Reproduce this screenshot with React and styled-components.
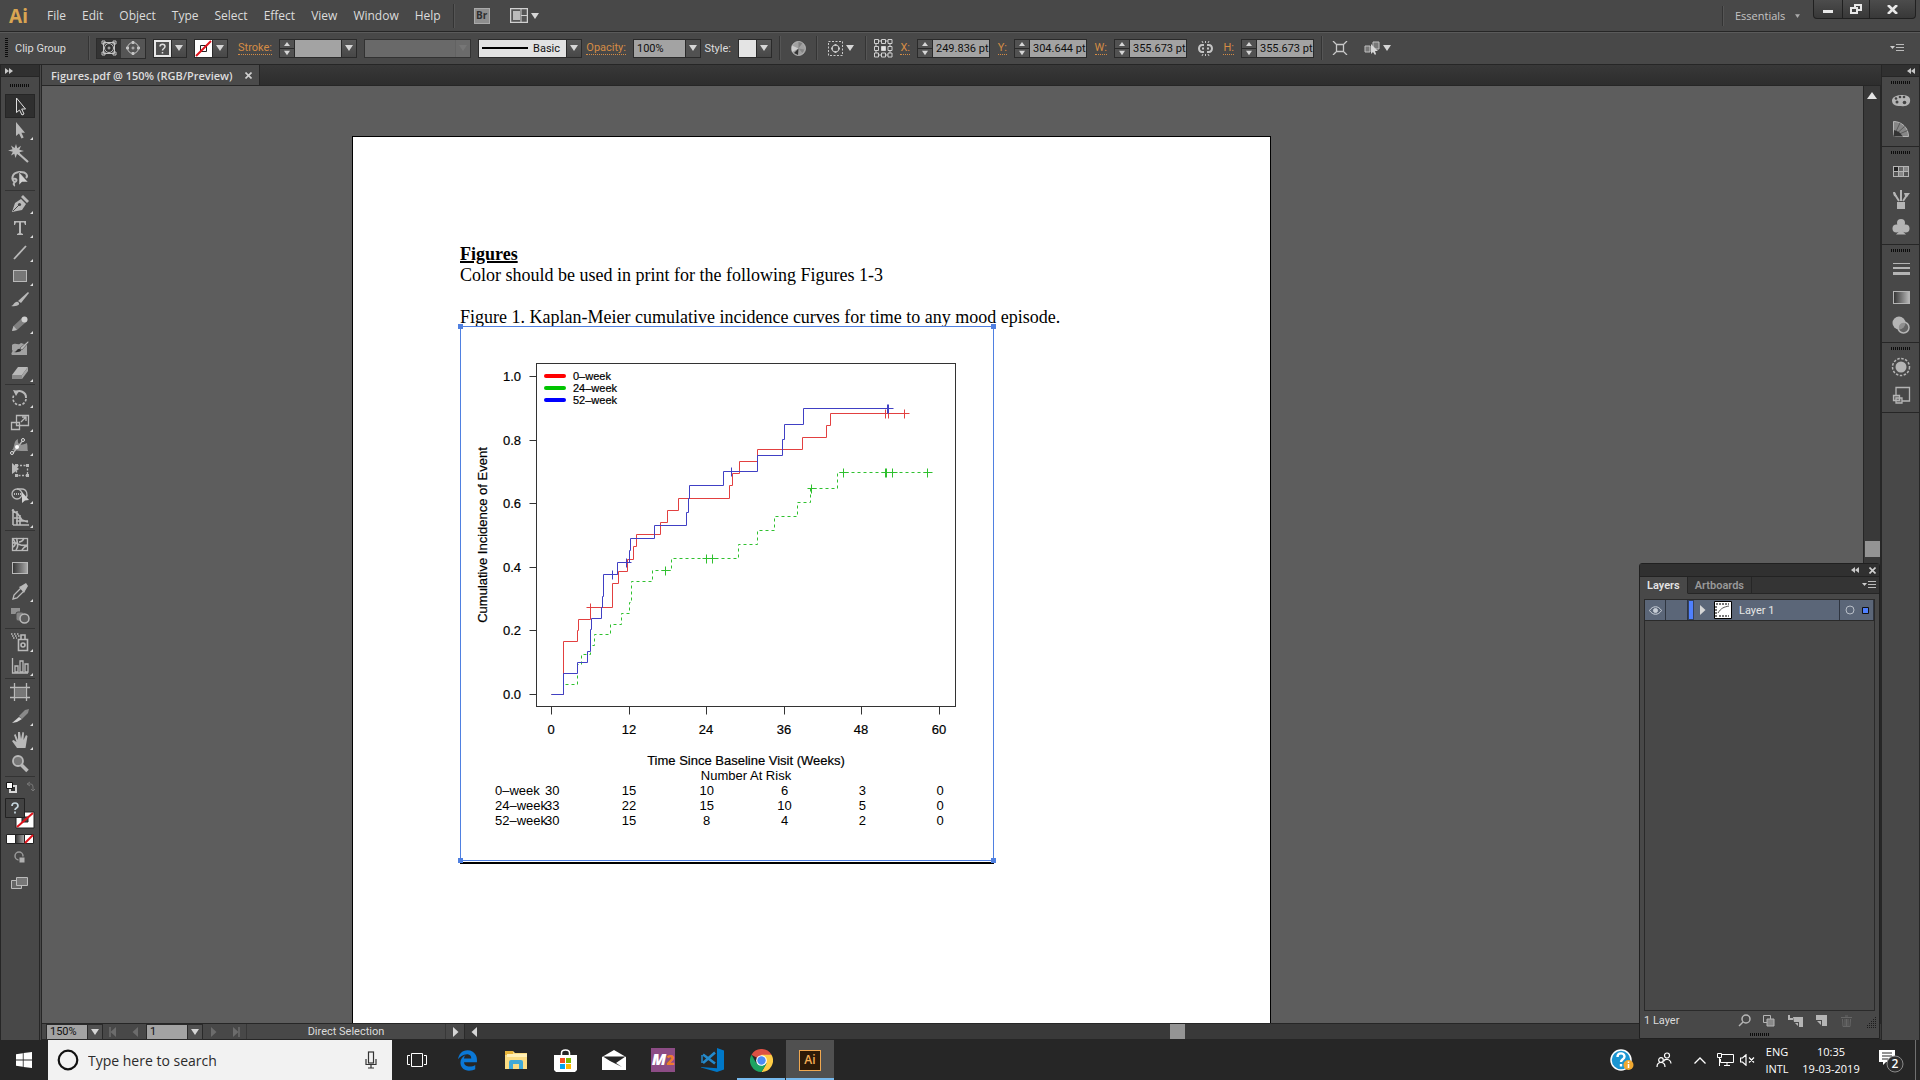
import React from 'react';
import styled, {createGlobalStyle} from 'styled-components';
import {FaEdgeLegacy} from 'react-icons/fa6';

const GlobalStyle = createGlobalStyle`
  * {
    box-sizing: border-box;
  }
  body {
    margin: 0;
    background: #262626;
    color: #dcdcdc;
    font-family: Roboto, "Noto Sans", sans-serif;
    font-size: 11px;
    overflow: hidden;
  }
  button, input, select {
    font: inherit;
    color: inherit;
    margin: 0;
    padding: 0;
    border: 0;
    border-radius: 0;
    background: none;
  }
  svg {
    display: block;
    flex: none;
  }
`;

const Window = styled.div`
  display: flex;
  flex-direction: column;
  height: 100vh;
  background: #484848;
`;

/* ---------- menu bar ---------- */

const MenuBar = styled.header`
  display: flex;
  align-items: center;
  height: 32px;
  padding-left: 9px;
  border-bottom: 1px solid #262626;
  font-family: "Open Sans", "Noto Sans", sans-serif;
`;

const Logo = styled.span`
  width: 30px;
  color: #d9a552;
  font-family: "Noto Sans", sans-serif;
  font-size: 19px;
  font-weight: 700;
  line-height: 24px;
`;

const MenuItem = styled.button`
  padding: 0 8px;
  font-size: 12px;
  line-height: 20px;
`;

const Rule = styled.span`
  flex: none;
  width: 1px;
  height: ${(props) => props.$height || 24}px;
  background: #343434;
  box-shadow: 1px 0 0 #555;
`;

const MenuIcons = styled.div`
  display: flex;
  gap: 20px;
  align-items: center;
  margin-left: 4px;
`;

const BridgeButton = styled.button`
  width: 16px;
  height: 16px;
  background: #8e8e8e;
  border: 1px solid #aaa;
  color: #303030;
  font-size: 10px;
  font-weight: 700;
  line-height: 13px;
`;

const IconButton = styled.button`
  display: flex;
  align-items: center;
  justify-content: center;
  gap: 3px;
  width: ${(props) => (props.$width ? props.$width + 'px' : 'auto')};
`;

const MenuEnd = styled.div`
  display: flex;
  align-items: center;
  gap: 12px;
  height: 31px;
  margin-left: auto;
  padding-right: 4px;
`;

const Workspace = styled.button`
  display: flex;
  align-items: center;
  gap: 10px;
  width: 66px;
  color: #c4c4c4;
`;

const WindowButtons = styled.div`
  display: flex;
  align-self: flex-start;
  height: 19px;
  border: 1px solid #202020;
  border-top: 0;
  border-radius: 0 0 4px 4px;
  background: linear-gradient(#4c4c4c, #383838);
`;

const WindowButton = styled.button`
  display: flex;
  align-items: center;
  justify-content: center;
  width: ${(props) => props.$width}px;
  & + & {
    border-left: 1px solid #202020;
  }
`;

/* ---------- control bar ---------- */

const ControlBar = styled.div`
  display: flex;
  align-items: center;
  gap: 7px;
  height: 33px;
  padding: 0 16px 1px 5px;
  border-top: 1px solid #5a5a5a;
  border-bottom: 1px solid #262626;
  white-space: nowrap;
`;

const Grip = styled.span`
  flex: none;
  width: ${(props) => (props.$across ? 20 : 3)}px;
  height: ${(props) => (props.$across ? 3 : 20)}px;
  background: repeating-linear-gradient(
    ${(props) => (props.$across ? '90deg' : '180deg')},
    #0c0c0c 0 1px,
    #484848 1px 2px
  );
`;

const ObjectKind = styled.span`
  width: 66px;
`;

const Toggles = styled.div`
  display: flex;
  width: 50px;
  height: 21px;
  border: 1px solid #2c2c2c;
`;

const Toggle = styled.button`
  display: flex;
  flex: 1;
  align-items: center;
  justify-content: center;
  background: ${(props) => (props.$on ? '#343434' : '#555')};
`;

const Boxed = styled.div`
  display: flex;
  height: 19px;
  border: 1px solid #2a2a2a;
`;

const Swatch = styled.button`
  display: flex;
  align-items: center;
  justify-content: center;
  width: 17px;
  background: ${(props) => props.$color || '#e4e4e4'};
`;

const Arrow = styled.button`
  display: flex;
  align-items: center;
  justify-content: center;
  width: 15px;
  border-left: 1px solid #2a2a2a;
  background: linear-gradient(#5a5a5a, #474747);
`;

const FieldName = styled.label`
  width: ${(props) => props.$width}px;
  display: flex;
  justify-content: flex-end;
  color: ${(props) => (props.$plain ? '#dcdcdc' : '#d58c45')};
  & > span {
    line-height: 13px;
    border-bottom: ${(props) => (props.$plain ? '0' : '1px dotted #d58c45')};
  }
`;

const Steps = styled.span`
  display: flex;
  flex-direction: column;
  width: 15px;
  border-right: 1px solid #2a2a2a;
`;

const Step = styled.button`
  display: flex;
  flex: 1;
  align-items: center;
  justify-content: center;
  background: #525252;
  & + & {
    border-top: 1px solid #2a2a2a;
  }
`;

const NumberInput = styled.input`
  width: ${(props) => props.$width || 56}px;
  padding-left: 3px;
  background: #a3a3a3;
  color: #101010;
`;

const SelectBox = styled.span`
  display: grid;
  grid-template-columns: ${(props) => props.$width}px 15px;
  height: ${(props) => props.$height || 19}px;
  border: 1px solid #2a2a2a;
  opacity: ${(props) => (props.$off ? 0.7 : 1)};
  & > select {
    grid-area: 1 / 1 / 2 / 3;
    appearance: none;
    padding-left: 3px;
    background: ${(props) => props.$color || '#a3a3a3'};
    color: #101010;
  }
  & > span {
    grid-area: 1 / 2 / 2 / 3;
    display: flex;
    align-items: center;
    justify-content: center;
    border-left: 1px solid #2a2a2a;
    background: #515151;
    pointer-events: none;
  }
`;

const BrushButton = styled.button`
  display: flex;
  align-items: center;
  justify-content: flex-end;
  gap: 5px;
  width: 87px;
  padding-right: 6px;
  background: #e2e2e2;
  color: #101010;
`;

const BarMenu = styled.button`
  margin-left: auto;
`;

/* ---------- work area ---------- */

const Body = styled.div`
  display: flex;
  flex: 1;
  min-height: 0;
`;

const ToolPanel = styled.aside`
  display: flex;
  flex-direction: column;
  align-items: center;
  flex: none;
  width: 42px;
  border-left: 1px solid #262626;
  border-right: 3px double #262626;
`;

const PanelCap = styled.div`
  display: flex;
  align-items: center;
  justify-content: ${(props) => (props.$end ? 'flex-end' : 'flex-start')};
  align-self: stretch;
  height: 12px;
  padding: 0 4px;
  background: #303030;
  border-bottom: 1px solid #262626;
`;

const GripRow = styled.div`
  display: flex;
  align-items: center;
  justify-content: center;
  height: ${(props) => props.$height}px;
`;

const ToolGroup = styled.div`
  display: flex;
  flex-direction: column;
  width: 30px;
  border-bottom: 1px solid #333;
  margin-bottom: 1px;
`;

const Tool = styled.button`
  height: 22px;
  width: 28px;
  margin: 1px;
  background: ${(props) => (props.$active ? '#2f2f2f' : 'none')};
  box-shadow: ${(props) => (props.$active ? '0 0 0 1px #262626' : 'none')};
`;

const Paints = styled.div`
  width: 30px;
`;

const Main = styled.main`
  display: flex;
  flex: 1;
  flex-direction: column;
  min-width: 0;
`;

const TabStrip = styled.div`
  display: flex;
  height: 21px;
  background: linear-gradient(#383838, #2d2d2d);
  border-bottom: 1px solid #262626;
`;

const DocumentTab = styled.div`
  display: flex;
  align-items: center;
  gap: 12px;
  padding: 0 7px 0 9px;
  background: #4a4a4a;
  border-right: 1px solid #262626;
  color: #dedede;
  font-family: "Open Sans", "Noto Sans", sans-serif;
  font-weight: 600;
`;

const CanvasRow = styled.div`
  display: flex;
  flex: 1;
  min-height: 0;
`;

const Canvas = styled.div`
  flex: 1;
  min-width: 0;
  overflow: hidden;
  background: #5d5d5d;
  padding: 50px 0 0 310px;
`;

const Artboard = styled.article`
  width: 919px;
  height: 1188px;
  padding: 107px 0 0 107px;
  border: 1px solid #000;
  background: #fff;
  color: #000;
  font-family: "Liberation Serif", serif;
  font-size: 18px;
  line-height: 21px;
  white-space: nowrap;
  h1, p {
    margin: 0;
    font-size: 18px;
  }
  h1 {
    text-decoration: underline;
    text-decoration-thickness: 2px;
  }
  p + p {
    margin-top: 21px;
  }
`;

const Figure = styled.figure`
  position: relative;
  width: 534px;
  height: 535px;
  margin: -2px 0 0;
  border: 1px solid #4f80e1;
  box-shadow: 0 1px 0 #fff, 0 3px 0 #000;
  font-family: "Liberation Sans", Arial, sans-serif;
  font-size: 13px;
  line-height: 15px;
`;

const Handle = styled.i`
  position: absolute;
  width: 5px;
  height: 5px;
  background: #4f80e1;
  ${(props) => props.$y}: -3px;
  ${(props) => props.$x}: -3px;
`;

const RiskTable = styled.table`
  width: 484px;
  margin-left: 34px;
  border-collapse: collapse;
  table-layout: fixed;
  caption {
    padding-left: 18px;
  }
  th, td {
    padding: 0;
    font-weight: 400;
    text-align: center;
  }
  th, th + td {
    text-align: left;
  }
`;

const VScroll = styled.div`
  display: flex;
  flex-direction: column;
  align-items: center;
  justify-content: space-between;
  width: 18px;
  padding: 6px 0 0;
  background: #393939;
  border-left: 1px solid #262626;
  border-right: 1px solid #262626;
`;

const VThumb = styled.div`
  width: 15px;
  height: 16px;
  margin-bottom: 466px;
  background: #949494;
`;

const StatusBar = styled.div`
  display: flex;
  align-items: center;
  height: 17px;
  border-top: 1px solid #262626;
  border-bottom: 1px solid #262626;
  padding-left: 4px;
`;

const StatusNav = styled.div`
  display: flex;
  align-items: center;
  justify-content: space-around;
  width: 43px;
`;

const StatusText = styled.div`
  width: 200px;
  border-left: 1px solid #383838;
  border-right: 1px solid #383838;
  line-height: 15px;
  text-align: center;
`;

const HScroll = styled.div`
  display: flex;
  flex: 1;
  align-items: center;
  align-self: stretch;
  padding-left: 5px;
  border-left: 1px solid #2a2a2a;
  background: #393939;
`;

const HThumb = styled.div`
  width: 15px;
  height: 15px;
  margin-left: 49%;
  background: #949494;
`;

const Dock = styled.aside`
  flex: none;
  width: 39px;
  border-left: 1px solid #262626;
  border-right: 1px solid #262626;
`;

const DockGroup = styled.div`
  display: flex;
  flex-direction: column;
  align-items: center;
  padding-bottom: 3px;
  border-bottom: 1px solid #262626;
`;

const DockButton = styled.button`
  display: flex;
  align-items: center;
  justify-content: center;
  width: 36px;
  height: 28px;
`;

/* ---------- layers panel ---------- */

const LayersPanel = styled.section`
  position: absolute;
  right: 40px;
  bottom: 41px;
  display: flex;
  flex-direction: column;
  width: 241px;
  height: 476px;
  background: #484848;
  border: 1px solid #202020;
  border-radius: 3px 3px 0 0;
`;

const PanelTitle = styled.div`
  display: flex;
  align-items: center;
  justify-content: flex-end;
  gap: 10px;
  height: 13px;
  padding-right: 3px;
  background: #303030;
  border-bottom: 1px solid #222;
`;

const PanelTabs = styled.div`
  display: flex;
  height: 17px;
  background: #343434;
`;

const PanelTab = styled.button`
  padding: 0 7px;
  border-right: 1px solid #262626;
  border-bottom: 1px solid ${(props) => (props.$active ? '#484848' : '#262626')};
  background: ${(props) => (props.$active ? '#484848' : '#353535')};
  color: ${(props) => (props.$active ? '#e4e4e4' : '#999')};
  font-weight: 600;
  line-height: 15px;
`;

const PanelMenu = styled.div`
  display: flex;
  flex: 1;
  align-items: center;
  justify-content: flex-end;
  padding-right: 3px;
  border-bottom: 1px solid #262626;
`;

const LayerList = styled.div`
  flex: 1;
  margin: 5px 4px 0;
  border: 1px solid #2a2a2a;
`;

const LayerRow = styled.div`
  display: flex;
  align-items: stretch;
  height: 21px;
  background: #5b6678;
  border-bottom: 1px solid #2a2a2a;
  color: #e6e6e6;
`;

const LayerCell = styled.div`
  display: flex;
  align-items: center;
  justify-content: ${(props) => (props.$grow ? 'flex-start' : 'center')};
  gap: ${(props) => props.$gap || 0}px;
  flex: ${(props) => (props.$grow ? '1' : 'none')};
  width: ${(props) => props.$width}px;
  padding-left: ${(props) => (props.$grow ? 4 : 0)}px;
  border-right: 1px solid #2f3540;
`;

const LayerColor = styled.span`
  width: 6px;
  border: 1px solid #33415e;
  background: #4f80ff;
`;

const PanelFoot = styled.div`
  display: flex;
  align-items: center;
  height: 19px;
  padding-left: 4px;
`;

const FootButtons = styled.div`
  display: flex;
  align-items: center;
  gap: 9px;
  margin-left: auto;
  padding-right: 2px;
`;

/* ---------- taskbar ---------- */

const Taskbar = styled.footer`
  display: flex;
  flex: none;
  height: 40px;
  background: #262626;
  color: #fff;
  font-family: "Open Sans", "Noto Sans", sans-serif;
`;

const Start = styled.button`
  display: flex;
  align-items: center;
  width: 48px;
  padding-left: 16px;
`;

const Search = styled.label`
  display: flex;
  align-items: center;
  gap: 9px;
  width: 344px;
  padding: 0 15px 0 9px;
  background: #f2f2f2;
  color: #2b2b2b;
  input {
    flex: 1;
    min-width: 0;
    font-size: 14px;
    outline: 0;
  }
  input::placeholder {
    color: #2b2b2b;
    opacity: 1;
  }
`;

const TaskButton = styled.button`
  display: flex;
  align-items: center;
  justify-content: center;
  width: ${(props) => props.$width || 48}px;
  margin-right: 1px;
  background: ${(props) => (props.$active ? '#505050' : 'none')};
  box-shadow: ${(props) => (props.$open ? 'inset 0 -2px 0 #76b9ed' : 'none')};
`;

const AiTile = styled.span`
  width: 22px;
  height: 21px;
  border: 1px solid #f0a850;
  background: #2c1a08;
  color: #f5ae55;
  font-size: 12px;
  font-weight: 600;
  line-height: 18px;
`;

const MTile = styled.span`
  display: flex;
  justify-content: center;
  width: 24px;
  height: 24px;
  background: #8c4c85;
  font-size: 16px;
  font-style: italic;
  font-weight: 800;
  line-height: 23px;
  b {
    color: #ee7d2b;
    font-size: 14px;
    font-style: normal;
  }
`;

const Tray = styled.div`
  display: flex;
  margin-left: auto;
`;

const TrayItem = styled.button`
  display: flex;
  align-items: center;
  justify-content: center;
  width: ${(props) => props.$width}px;
`;

const TrayText = styled.button`
  width: ${(props) => props.$width}px;
  text-align: center;
  line-height: 17px;
`;

const ShowDesktop = styled.button`
  width: 5px;
  border-left: 1px solid #707070;
`;

/* ---------- drawings ---------- */

const Down = ({w = 8, c = '#d6d6d6'}) => (
  <svg width={w} height={6} viewBox="0 0 8 6"><path d="M0 0h8L4 6z" fill={c} /></svg>
);

const Up = () => (
  <svg width={6} height={4} viewBox="0 0 6 4"><path d="M3 0l3 4H0z" fill="#d6d6d6" /></svg>
);

const Side = ({left, bar, c = '#d6d6d6'}) => (
  <svg width={9} height={10} viewBox="0 0 9 10">
    <path d={left ? 'M7 0v10L1.5 5z' : 'M2 0v10l5.5-5z'} fill={c} />
    {bar && <path d={left ? 'M1 0v10' : 'M8 0v10'} stroke={c} strokeWidth="1.5" />}
  </svg>
);

const Chevrons = ({left}) => (
  <svg width={8} height={6} viewBox="0 0 8 6">
    <path d={left ? 'M4 0v6L0 3zM8 0v6L4 3z' : 'M0 0v6l4-3zM4 0v6l4-3z'} fill="#c8c8c8" />
  </svg>
);

const Cross = () => (
  <svg width={7} height={7} viewBox="0 0 7 7">
    <path d="M.5.5l6 6M6.5.5l-6 6" stroke="#d0d0d0" strokeWidth="1.6" />
  </svg>
);

const ListIcon = () => (
  <svg width={14} height={10} viewBox="0 0 14 10">
    <path d="M0 3h5L2.500 6z" fill="#ccc" />
    <path d="M6 1.500h8M6 4.500h8M6 7.500h8" stroke="#bbb" />
  </svg>
);

const G = '#b9b9b9';
const line = {fill: 'none', stroke: G, strokeWidth: 1.3};

const toolGroups = [
  [
    {name: 'Selection', art: <path d="M10.500 3v14.500l3-2.500 2.500 5 2-1-2.300-5h3.800z" fill="#333" stroke="#e0e0e0" />},
    {name: 'Direct Selection', more: true, art: <path d="M10 3v14l3-2.500 2.500 5 2.200-1-2.300-4.800H19z" fill={G} />},
    {name: 'Magic Wand', art: <><path d="M12 10l10 9" {...line} strokeWidth="2.200" /><path d="M10 1l1.300 4.200L15 2.800 13.300 6.700 18 8l-4.500 1.300L15 13l-4-2-1.500 4-1.200-4.300L5 12.500l1.800-3.800L2 7.500l4.500-1.200L5 2.500 8.600 5z" fill={G} /></>},
    {name: 'Lasso', art: <><path d="M9 15c-4-1-4-9 4-10 8-.7 9 4 7 6M7 12c3-1 5 1 2 3s0 3-1 4" {...line} strokeWidth="2" /><path d="M13 5v13l3-3 6 0z" fill="#d0d0d0" stroke="#484848" strokeWidth=".5" /></>},
  ],
  [
    {name: 'Pen', more: true, art: <><path d="M6 19l3-9 6-4 5 5-4 6z" fill={G} /><path d="M15 4l2-2 6 6-2 2z" fill={G} /><path d="M7 18l6-6" stroke="#484848" /><circle cx="13.500" cy="11.500" r="1.600" fill="#484848" /></>},
    {name: 'Type', more: true, art: <path d="M8 4h12v4h-1l-1-2.500h-3V16l2 1v1h-6v-1l2-1V5.500h-3L9 8H8z" fill={G} />},
    {name: 'Line Segment', more: true, art: <path d="M8 18L20 5" {...line} strokeWidth="1.800" />},
    {name: 'Rectangle', more: true, art: <rect x="7.500" y="5.500" width="13" height="11" fill="#777" stroke={G} />},
    {name: 'Paintbrush', art: <><path d="M12 12L22 3l1 1-8 10z" fill={G} /><path d="M5 17c3 0 3-5 7-4 3 2 0 5-7 4z" fill={G} /></>},
    {name: 'Pencil', more: true, art: <><path d="M6 18l1.500-5L16 5l4 4-9 8z" fill="#808080" /><path d="M6 18l1.500-5 3.500 4z" fill={G} /><circle cx="18.500" cy="6.500" r="3" fill="#d0d0d0" /></>},
    {name: 'Blob Brush', art: <><path d="M6 8c4-3 6 1 9-2l6 2v10H6c-2-2 2-4 0-5z" fill="#a2a2a2" /><path d="M14 11l8-7 1 1-7 8z" fill={G} stroke="#484848" strokeWidth=".6" /><path d="M8 15c3 0 3-4 6-3s0 4-6 3z" fill="#303030" /></>},
    {name: 'Eraser', more: true, art: <><path d="M6 14l6-8h10l-6 8z" fill={G} /><path d="M6 14h10v4H6z" fill="#8a8a8a" /><path d="M16 14l6-8v4l-6 8z" fill="#a5a5a5" /></>},
  ],
  [
    {name: 'Rotate', more: true, art: <><path d="M9 6a6.500 6.500 0 0 1 11 5" {...line} strokeWidth="2" /><path d="M20 12a6.500 6.500 0 1 1-12-4" {...line} strokeWidth="1.600" strokeDasharray="2.500 1.500" /><path d="M7 3l6 1-3 5z" fill={G} /></>},
    {name: 'Scale', more: true, art: <><path d="M5.500 11.500h8v7h-8zM10.500 4.500h12v10h-12z" {...line} /><path d="M15 11l5-5M16 6h4v4" {...line} /></>},
    {name: 'Width', more: true, art: <><path d="M6 15c3-2 1-9 6-11-1 6 3 7 9 4 1 4 0 6 1 8-5 0-9 0-16-1z" fill="#939393" /><path d="M7 18L18 4" {...line} /><circle cx="6" cy="18" r="1.500" fill="#484848" stroke="#ddd" /><circle cx="11" cy="12" r="2" fill="#fff" /><circle cx="17" cy="5" r="1.500" fill="#484848" stroke="#ddd" /></>},
    {name: 'Free Transform', art: <><path d="M10.500 6.500h11v10h-11z" {...line} strokeDasharray="2 1.500" /><path d="M6 4v11l7-5z" fill={G} /><path d="M9 5h3v3H9zM20 5h3v3h-3zM20 15h3v3h-3zM9 15h3v3H9z" fill={G} /></>},
    {name: 'Shape Builder', more: true, art: <><circle cx="11" cy="11" r="5" {...line} /><path d="M11 6h5c5 0 6 6 4 9" {...line} /><path d="M8 11h9" stroke="#ddd" strokeDasharray="1 1" strokeWidth="1.500" /><path d="M16 9v11l3-2.500 4-.5z" fill="#d0d0d0" /></>},
    {name: 'Perspective Grid', more: true, art: <path d="M7 2v16M11 4v14M14 8v10M6 3l6 4 4 6 6 2M8 11h7M10 14h12M7 18h16" {...line} strokeWidth="1.600" />},
  ],
  [
    {name: 'Mesh', art: <><rect x="6.500" y="5.500" width="15" height="12" {...line} /><path d="M6 10c6-1 8 4 15 2M10 17c4-5 0-8 1-12M16 17c2-3 4-4 6-4M7 6c3 4 3 6 0 8M13 9c4 0 4-2 5-4" {...line} strokeWidth="1.600" /></>},
    {name: 'Gradient', art: <><defs><linearGradient id="tool"><stop stopColor="#333" /><stop offset="1" stopColor="#aaa" /></linearGradient></defs><rect x="6.500" y="5.500" width="15" height="11" fill="url(#tool)" stroke={G} /></>},
    {name: 'Eyedropper', more: true, art: <><path d="M7 18l1-4 7-7 3 3-7 7z" {...line} /><path d="M13 6l2-1 5-3 2 3-3 5-1 2z" fill={G} /></>},
    {name: 'Blend', art: <><path d="M5 3h9v6H5z" fill="#909090" /><rect x="10" y="7" width="8" height="9" rx="2" fill="#848484" stroke="#484848" /><circle cx="18.500" cy="13.500" r="4.500" fill="#5c5c5c" stroke={G} strokeWidth="1.500" /></>},
  ],
  [
    {name: 'Symbol Sprayer', more: true, art: <><path d="M12.500 8.500h9v11h-9zM15 8V4h4v4" {...line} strokeWidth="1.600" /><circle cx="17" cy="14" r="2" {...line} strokeWidth="1.600" /><path d="M5 3h8M6 5h8M7 7h4" stroke={G} strokeDasharray="1.500 1.500" strokeWidth="1.500" /></>},
    {name: 'Column Graph', more: true, art: <><path d="M6.500 3v15H22" {...line} /><path d="M9 11h3v6H9zM14 6h3v11h-3zM19 9h3v8h-3z" {...line} /></>},
  ],
  [
    {name: 'Artboard', art: <><path d="M8.500 2v18M20.500 2v18M4 6.500h20M4 16.500h20" {...line} /><rect x="9" y="7" width="11" height="9" fill="#777" /></>},
    {name: 'Slice', more: true, art: <><path d="M6 18l7-6 3 2-5 3z" fill="#d5d5d5" /><path d="M13 11l6-6 4-1-1 4-6 6z" fill="#8a8a8a" /></>},
    {name: 'Hand', more: true, art: <path d="M11 19L6 12l1.500-1 3 2L8 6l1.500-1L12 11V3h2l1 7 1.500-7 1.500.500L17.500 11 20 6l1.500 1L19.500 19z" fill={G} />},
    {name: 'Zoom', art: <><circle cx="12" cy="8" r="5" fill="#777" stroke={G} strokeWidth="1.800" /><path d="M15.500 12l6 6" stroke={G} strokeWidth="3.500" /></>},
  ],
];

const D = '#b4b4b4';
const dockGroups = [
  [
    ['Color', <><path d="M1 9C2 3 18 2 19 8c1 5-3 8-9 7-7 0-9-2-9-6z" fill={D} /><g fill="#444"><circle cx="6" cy="11" r="1.500" /><circle cx="5" cy="7.500" r="1.300" /><circle cx="9" cy="6" r="1.300" /><circle cx="13" cy="6" r="1.300" /><circle cx="13.500" cy="11.500" r="1.800" /></g></>],
    ['Color Guide', <><path d="M2.500 2.500c8 0 15 6 15 15h-15z" fill="#868686" stroke={D} /><path d="M2.500 17.500L9 4M2.500 17.500l11-10M2.500 17.500l14-6" stroke="#5a5a5a" /><path d="M2.500 17.500L3 11l5 2 4 4.500z" fill="#333" /></>],
  ],
  [
    ['Swatches', <><rect x="2" y="5" width="16" height="11" fill={D} /><path d="M3 6h4v4H3z" fill="#222" /><path d="M8 6h4v4H8z" fill="#666" /><path d="M13 6h4v4h-4zM8 11h4v4H8z" fill="#888" /><path d="M3 11h4v4H3zM13 11h4v4h-4z" fill="#555" /></>],
    ['Brushes', <><path d="M6 13h8v7H6z" fill={D} /><path d="M8 12L3 4M10 12V1M12 12l4-6" stroke={D} strokeWidth="2" /><path d="M14 7l-1-3 6 0-3 4zM2 3l2 0 2 5-3-1z" fill={D} /></>],
    ['Symbols', <><circle cx="10" cy="6" r="4" fill={D} /><circle cx="5.500" cy="11.500" r="4" fill={D} /><circle cx="14.500" cy="11.500" r="4" fill={D} /><path d="M9 9h2c0 5 1 6 4 8.500H5C8 15 9 14 9 9z" fill={D} /></>],
  ],
  [
    ['Stroke', <path d="M2 4h17v1H2zM2 8h17v2H2zM2 13h17v3H2z" fill={D} />],
    ['Gradient', <><defs><linearGradient id="dock"><stop stopColor="#333" /><stop offset="1" stopColor="#bbb" /></linearGradient></defs><rect x="2.500" y="4.500" width="16" height="12" fill="url(#dock)" stroke={D} /></>],
    ['Transparency', <><circle cx="8" cy="8" r="6.500" fill={D} /><circle cx="12.500" cy="12.500" r="5.500" fill="#77777799" stroke={D} strokeWidth="1.500" /></>],
  ],
  [
    ['Appearance', <><circle cx="10" cy="10" r="5.500" fill={D} /><circle cx="10" cy="10" r="8.500" fill="none" stroke={D} strokeDasharray="2.500 1.500" strokeWidth="1.500" /></>],
    ['Graphic Styles', <><path d="M5 10V2.500h13.500v13.500H11" fill="none" stroke={D} strokeWidth="1.300" /><path d="M2.500 10.500h6v5h-6zM5 13h6v5H5z" fill="#666" stroke={D} strokeWidth="1.300" /></>],
  ],
];

/* ---------- chart ---------- */

const risk = [
  ['0–week', 30, 15, 10, 6, 3, 0],
  ['24–week', 33, 22, 15, 10, 5, 0],
  ['52–week', 30, 15, 8, 4, 2, 0],
];

const curves = [
  {
    name: '24–week',
    color: '#2fc02f',
    dash: '3 3',
    d: 'M552 694H564V684H578V664H582V654H591V645H595V634H611V624H622V613H630V602H632V581H653V570H672V558H739V544H758V530H775V516H798V502H811V488H838V472H928',
    marks: [[666, 570], [707, 558], [713, 558], [812, 488], [844, 472], [886, 472], [887, 472], [893, 472], [928, 472]],
  },
  {
    name: '0–week',
    color: '#e24040',
    d: 'M552 694H564V641H578V630H579V619H591V607H613V583H619V571H628V559H634V546H637V534H661V522H668V510H679V498H730V485H733V473H740V461H758V449H803V437H827V425H831V413H905',
    marks: [[591, 607], [886, 413], [889, 413], [905, 413]],
  },
  {
    name: '52–week',
    color: '#4040c4',
    d: 'M552 694H564V673H578V662H588V651H591V629H592V618H602V607H603V596H604V574H618V562H630V550H631V538H655V525H687V512H689V498H690V485H724V471H758V455H783V439H785V424H804V408H891',
    marks: [[613, 574], [627, 562], [732, 471], [888, 408], [889, 408]],
  },
];

const legend = [['0–week', '#f00'], ['24–week', '#00c400'], ['52–week', '#00f']];
const weeks = [0, 12, 24, 36, 48, 60];
const weekX = (week) => 551 + Math.round(week * 6.468);
const valueY = (value) => 694 - Math.round(value * 318);

const Chart = function () {
  return (
    <svg width="532" height="441" viewBox="461 327 532 441" fill="#000">
      <g fill="none" stroke="#333" transform="translate(.5 .5)">
        <rect x="536" y="363" width="419" height="343" />
        {weeks.map((week) => <path key={week} d={`M${weekX(week)} 706v8`} />)}
        {[0, 0.2, 0.4, 0.6, 0.8, 1].map((v) => <path key={v} d={`M529 ${valueY(v)}h7`} />)}
      </g>
      {curves.map((curve) => (
        <g key={curve.name} fill="none" stroke={curve.color} transform="translate(-.5 .5)">
          <path d={curve.d} strokeDasharray={curve.dash} />
          {curve.marks.map(([x, y]) => <path key={x} d={`M${x - 4} ${y}h9M${x} ${y - 4}v9`} />)}
        </g>
      ))}
      {legend.map(([name, color], i) => (
        <g key={name}>
          <path d={`M546 ${376 + i * 12}h18`} stroke={color} strokeWidth="4" strokeLinecap="round" />
          <text x="573" y={380 + i * 12} fontSize="11" stroke="#000" strokeWidth=".2">{name}</text>
        </g>
      ))}
      <g stroke="#000" strokeWidth=".2">
        {[0, 0.2, 0.4, 0.6, 0.8, 1].map((v) => (
          <text key={v} x="521" y={valueY(v) + 5} textAnchor="end">{v.toFixed(1)}</text>
        ))}
        {weeks.map((week) => (
          <text key={week} x={weekX(week)} y="734" textAnchor="middle">{week}</text>
        ))}
        <text x="746" y="765" textAnchor="middle">Time Since Baseline Visit (Weeks)</text>
        <text transform="translate(487 535) rotate(-90)" textAnchor="middle">Cumulative Incidence of Event</text>
      </g>
    </svg>
  );
};

const Num = ({id, label, width, value}) => (
  <>
    <FieldName htmlFor={id} $width={width}><span>{label}</span></FieldName>
    <Boxed>
      <Steps>
        <Step aria-label={label + ' up'}><Up /></Step>
        <Step aria-label={label + ' down'}><Down w={6} /></Step>
      </Steps>
      <NumberInput id={id} defaultValue={value} />
    </Boxed>
  </>
);

const Pick = ({id, label, value, width, height, color, off}) => (
  <SelectBox $width={width} $height={height} $color={color} $off={off}>
    <select id={id} aria-label={label} disabled={off}><option>{value}</option></select>
    <span><Down c={off ? '#888' : undefined} /></span>
  </SelectBox>
);

const Controls = function () {
  return (
    <ControlBar>
      <Grip />
      <ObjectKind>Clip Group</ObjectKind>
      <Rule />
      <Toggles>
        <Toggle $on aria-label="Edit clipping path">
          <svg width="16" height="16" viewBox="0 0 16 16" fill="none" stroke="#c4c4c4">
            <path d="M2.500 2.500h11v11h-11z" /><circle cx="8" cy="8" r="4.500" /><circle cx="8" cy="8" r="1" />
            <path d="M1 1h3v3H1zM12 1h3v3h-3zM1 12h3v3H1zM12 12h3v3h-3z" />
          </svg>
        </Toggle>
        <Toggle aria-label="Edit contents">
          <svg width="16" height="16" viewBox="0 0 16 16" fill="none" stroke="#c4c4c4">
            <circle cx="8" cy="8" r="5.500" /><circle cx="8" cy="8" r="1" />
            <path d="M8 1v3M8 12v3M1 8h3M12 8h3" strokeWidth="2.500" />
          </svg>
        </Toggle>
      </Toggles>
      <Boxed>
        <Swatch $color="#505050" aria-label="Fill">
          <svg width="17" height="17" viewBox="0 0 17 17"><path d="M1 1h15v15H1z" fill="none" stroke="#e8e8e8" strokeWidth="2" /><path d="M6 6.500c0-3 5-3 5 0 0 2-2.500 2-2.500 4M8.500 12v1.500" fill="none" stroke="#ddd" strokeWidth="1.500" /></svg>
        </Swatch>
        <Arrow aria-label="Fill options"><Down /></Arrow>
      </Boxed>
      <Boxed>
        <Swatch $color="#fff" aria-label="Stroke colour">
          <svg width="17" height="17" viewBox="0 0 17 17"><path d="M5.500 5.500h6v6h-6z" fill="none" stroke="#222" /><path d="M1 16L16 1" stroke="#e0141c" strokeWidth="2" /></svg>
        </Swatch>
        <Arrow aria-label="Stroke options"><Down /></Arrow>
      </Boxed>
      <FieldName htmlFor="stroke" $width={37}><span>Stroke:</span></FieldName>
      <Boxed>
        <Steps>
          <Step aria-label="Stroke up"><Up /></Step>
          <Step aria-label="Stroke down"><Down w={6} /></Step>
        </Steps>
        <NumberInput id="stroke" $width={46} />
        <Arrow aria-label="Stroke weights"><Down /></Arrow>
      </Boxed>
      <Pick label="Width profile" value="" width={90} color="#8c8c8c" off />
      <Boxed>
        <BrushButton>
          <svg width="46" height="2"><path d="M0 1h46" stroke="#000" strokeWidth="2" /></svg>
          Basic
        </BrushButton>
        <Arrow aria-label="Brushes"><Down /></Arrow>
      </Boxed>
      <FieldName htmlFor="opacity" $width={37}><span>Opacity:</span></FieldName>
      <Pick id="opacity" value="100%" width={51} />
      <FieldName as="span" $plain $width={23}><span>Style:</span></FieldName>
      <Boxed><Swatch aria-label="Style" /><Arrow aria-label="Styles"><Down /></Arrow></Boxed>
      <Rule />
      <IconButton $width={22} aria-label="Recolor artwork">
        <svg width="15" height="15" viewBox="0 0 15 15"><circle cx="7.500" cy="7.500" r="7" fill="#a0a0a0" stroke="#c0c0c0" strokeWidth=".8" /><path d="M7.500 7.500L1 4.500 1 11z" fill="#ccc" /><path d="M7.500 7.500L3 12l4 2z" fill="#333" /><path d="M7.500 7.500V1l4 1z" fill="#808080" /><path d="M7.500 7.500l6 1-2 3.500z" fill="#858585" /></svg>
      </IconButton>
      <Rule />
      <IconButton $width={34} aria-label="Align">
        <svg width="15" height="15" viewBox="0 0 15 15" fill="none" stroke="#c8c8c8"><path d="M.5.5h14v14H.5z" strokeDasharray="2 1.500" /><circle cx="7.500" cy="7.500" r="3.500" /><path d="M7.500 3v2M7.500 10v2M3 7.500h2M10 7.500h2" strokeWidth="2" /></svg>
        <Down />
      </IconButton>
      <Rule />
      <IconButton $width={20} aria-label="Reference point">
        <svg width="20" height="20" viewBox="0 0 20 20" fill="#484848" stroke="#d0d0d0"><path d="M3 3h14v14H3z" /><path d="M1.500 1.500h4v4h-4zM8.500 1.500h4v4h-4zM15 1.500h4v4h-4zM1.500 8.500h4v4h-4zM15 8.500h4v4h-4zM1.500 15h4v4h-4zM8.500 15h4v4h-4zM15 15h4v4h-4z" /><path d="M8.500 8.500h4v4h-4z" fill="#e4e4e4" /></svg>
      </IconButton>
      <Num id="x" label="X:" width={10} value="249.836 pt" />
      <Num id="y" label="Y:" width={10} value="304.644 pt" />
      <Num id="w" label="W:" width={13} value="355.673 pt" />
      <IconButton $width={22} aria-label="Constrain proportions">
        <svg width="15" height="15" viewBox="0 0 15 15" fill="none" stroke="#c4c4c4" strokeWidth="2"><path d="M6 4H4a3 3.500 0 0 0 0 7h2M9 4h2a3 3.500 0 0 1 0 7H9M4 7.500h2M9 7.500h2" /><path d="M7.500 0v2M4 0l1 2M11 0l-1 2M7.500 13v2M4 15l1-2M11 15l-1-2" strokeWidth="1" /></svg>
      </IconButton>
      <Num id="h" label="H:" width={11} value="355.673 pt" />
      <Rule />
      <IconButton $width={22} aria-label="Isolate selected object">
        <svg width="16" height="14" viewBox="0 0 16 14" fill="none" stroke="#c8c8c8"><path d="M4.500 3.500h7v7h-7zM1 0l3 3M15 0l-3 3M1 14l3-3M15 14l-3-3" strokeWidth="1.300" /></svg>
      </IconButton>
      <IconButton $width={38} aria-label="Select similar">
        <svg width="16" height="14" viewBox="0 0 16 14"><path d="M1 5h5v6H1zM9 1h6v7H9z" fill="#777" stroke="#c0c0c0" /><path d="M7 3v10l2-2 2 3 1-1-1-3h3z" fill="#d6d6d6" /></svg>
        <Down />
      </IconButton>
      <BarMenu aria-label="Panel menu"><ListIcon /></BarMenu>
    </ControlBar>
  );
};

const Layers = function () {
  return (
    <LayersPanel>
      <PanelTitle><Chevrons left /><Cross /></PanelTitle>
      <PanelTabs>
        <PanelTab $active>Layers</PanelTab>
        <PanelTab>Artboards</PanelTab>
        <PanelMenu><ListIcon /></PanelMenu>
      </PanelTabs>
      <LayerList>
        <LayerRow>
          <LayerCell $width={21}>
            <svg width="13" height="9" viewBox="0 0 13 9" fill="none" stroke="#c8ced6"><path d="M.5 4.500c3-5 9-5 12 0-3 5-9 5-12 0z" /><circle cx="6.500" cy="4.500" r="2" fill="#c8ced6" /></svg>
          </LayerCell>
          <LayerCell $width={22} />
          <LayerColor />
          <LayerCell $grow $gap={7}>
            <Side />
            <svg width="18" height="18" viewBox="0 0 18 18"><path d="M.5.5h17v17H.5z" fill="#fff" stroke="#000" /><path d="M2 3h13M2 5V16M5 15h10" stroke="#777" strokeWidth="2" strokeDasharray="2 1" /><path d="M4 12c3-5 6-6 11-7" fill="none" stroke="#555" /></svg>
            Layer 1
          </LayerCell>
          <LayerCell $width={34} $gap={7}>
            <svg width="10" height="10" viewBox="0 0 10 10"><circle cx="5" cy="5" r="4" fill="none" stroke="#b9bfc8" /></svg>
            <svg width="7" height="7" viewBox="0 0 7 7"><path d="M.5.5h6v6h-6z" fill="#4f80ff" stroke="#111" /></svg>
          </LayerCell>
        </LayerRow>
      </LayerList>
      <PanelFoot>
        1 Layer
        <FootButtons>
          <IconButton $width={16} aria-label="Locate"><svg width="13" height="13" viewBox="0 0 13 13" fill="none" stroke="#b5b5b5" strokeWidth="1.500"><circle cx="8" cy="5" r="4" /><path d="M5 8l-4 4" /></svg></IconButton>
          <IconButton $width={16} aria-label="Clipping mask"><svg width="12" height="12" viewBox="0 0 12 12" fill="#888" stroke="#b5b5b5"><path d="M.5.5h7v7h-7z" fill="none" /><path d="M4 4h7v7H4z" /></svg></IconButton>
          <IconButton $width={18} aria-label="New sublayer"><svg width="15" height="12" viewBox="0 0 15 12" fill="#b5b5b5"><path d="M5 2h10v10h-4V7H6zM0 0h2v3h3v2H0zM7 8l3 0 0 3z" /></svg></IconButton>
          <IconButton $width={16} aria-label="New layer"><svg width="11" height="11" viewBox="0 0 11 11" fill="#b5b5b5"><path d="M0 0h11v11H6V5H0zM1 6h4v4z" /></svg></IconButton>
          <IconButton $width={16} aria-label="Delete"><svg width="11" height="12" viewBox="0 0 11 12" fill="none" stroke="#666"><path d="M0 2.500h11M4 1h3M1.500 4l.5 7.500h7l.5-7.500M4 4v7M5.500 4v7M7 4v7" /></svg></IconButton>
          <svg width="14" height="14" viewBox="0 0 14 14"><path d="M12.500 3v11M10.500 5v9M8.500 7v7M6.500 9v5M4.500 11v3" stroke="#1c1c1c" strokeDasharray="1 1" /></svg>
        </FootButtons>
      </PanelFoot>
      <GripRow $height={8}><Grip $across /></GripRow>
    </LayersPanel>
  );
};

const TaskbarRow = function () {
  return (
    <Taskbar>
      <Start aria-label="Start">
        <svg width="16" height="16" viewBox="0 0 16 16" fill="#fff"><path d="M0 2.200L6.800 1.200v6.400H0zM7.600 1.100L16 0v7.600H7.600zM0 8.400h6.800v6.400L0 13.800zM7.600 8.400H16V16l-8.400-1.100z" /></svg>
      </Start>
      <Search>
        <svg width="22" height="22" viewBox="0 0 22 22"><circle cx="11" cy="11" r="9.300" fill="none" stroke="#111" strokeWidth="2.200" /></svg>
        <input placeholder="Type here to search" aria-label="Search" />
        <svg width="12" height="18" viewBox="0 0 12 18" fill="none" stroke="#333" strokeWidth="1.200"><rect x="3.500" y="1" width="5" height="11" /><path d="M1 8v5.500h10V8M6 14v3M3 17h6" /></svg>
      </Search>
      <TaskButton $width={50} aria-label="Task view">
        <svg width="20" height="16" viewBox="0 0 20 16" fill="none" stroke="#fff"><path d="M4.500 1.500h11v13h-11zM3 3.500H.5v9H3M17 3.500h2.500v9H17" /></svg>
      </TaskButton>
      <TaskButton aria-label="Edge"><FaEdgeLegacy size={21} color="#0b78d6" /></TaskButton>
      <TaskButton aria-label="File Explorer">
        <svg width="22" height="18" viewBox="0 0 22 18"><path d="M0 0h8l2 2h12v16H0z" fill="#fbdc83" /><path d="M0 0h8v4H0z" fill="#e9b53a" /><path d="M2 3h20v3H2z" fill="#fff0b8" /><path d="M4 18v-7q0-2 2-2h10q2 0 2 2v7h-4v-5H8v5z" fill="#3fa9d8" /></svg>
      </TaskButton>
      <TaskButton aria-label="Store">
        <svg width="23" height="23" viewBox="0 0 23 23"><path d="M7.500 8V4c0-4 8-4 8 0v4" fill="none" stroke="#fff" strokeWidth="1.500" /><path d="M0 6h23v15l-2 2H2l-2-2z" fill="#fff" /><path d="M6 9h5v5H6z" fill="#f25022" /><path d="M12 9h5v5h-5z" fill="#7fba00" /><path d="M6 15h5v5H6z" fill="#00a4ef" /><path d="M12 15h5v5h-5z" fill="#ffb900" /></svg>
      </TaskButton>
      <TaskButton aria-label="Mail">
        <svg width="24" height="20" viewBox="0 0 24 20"><path d="M0 7l12-7 12 7v13H0z" fill="#fff" /><path d="M1 6.500h22.500L14 13l6 4-12-6z" fill="#262626" /></svg>
      </TaskButton>
      <TaskButton aria-label="Mail client"><MTile>M<b>2</b></MTile></TaskButton>
      <TaskButton aria-label="Code">
        <svg width="24" height="24" viewBox="0 0 24 24"><path d="M17 0l7 2.500v19L17 24 1 19.500V19l16 1.200z" fill="#0078c8" /><path d="M3 6.500l12 9M15 4.500L3 15" fill="none" stroke="#2489ca" strokeWidth="2.600" /><path d="M2 7v8" stroke="#2489ca" strokeWidth="1.500" /></svg>
      </TaskButton>
      <TaskButton $open aria-label="Chrome">
        <svg width="23" height="23" viewBox="0 0 24 24"><path d="M12 12L1.600 6A12 12 0 0 1 22.400 6z" fill="#dd5144" /><path d="M12 12V6h10.400A12 12 0 0 1 12 24l5.200-9z" fill="#ffcd46" /><path d="M12 12l5.200 3L12 24A12 12 0 0 1 1.600 6l5.200 9z" fill="#1da462" /><circle cx="12" cy="12" r="5.600" fill="#fff" /><circle cx="12" cy="12" r="4.400" fill="#4c8bf5" /></svg>
      </TaskButton>
      <TaskButton $open $active aria-label="Illustrator"><AiTile>Ai</AiTile></TaskButton>
      <Tray>
        <TrayItem $width={42} aria-label="Help">
          <svg width="24" height="22" viewBox="0 0 24 22"><circle cx="11" cy="11" r="10" fill="#1b95d1" stroke="#fff" strokeWidth="1.500" /><path d="M7.500 8c0-5 7-4.500 7-.5 0 3-3.500 2.500-3.500 5.500M11 15v2.500" fill="none" stroke="#fff" strokeWidth="2.400" /><circle cx="18.500" cy="16" r="5" fill="#f0a830" /><path d="M18.500 12.500v1.500M18.500 15v4" stroke="#fff" strokeWidth="1.500" /></svg>
        </TrayItem>
        <TrayItem $width={42} aria-label="People">
          <svg width="16" height="16" viewBox="0 0 16 16" fill="none" stroke="#fff" strokeWidth="1.200"><circle cx="5" cy="8" r="2.300" /><path d="M1 15c0-6 8-6 8 0M7.500 9.500c1-3 7-3 7.500 2" /><circle cx="11" cy="3.500" r="2.500" /></svg>
        </TrayItem>
        <TrayItem $width={30} aria-label="Hidden icons">
          <svg width="12" height="7" viewBox="0 0 12 7"><path d="M.5 6.500L6 1l5.500 5.500" fill="none" stroke="#fff" strokeWidth="1.300" /></svg>
        </TrayItem>
        <TrayItem $width={20} aria-label="Network">
          <svg width="17" height="14" viewBox="0 0 17 14" fill="none" stroke="#fff"><path d="M5 1.500h11.500v8H3.500V6M7 12.500h6M10 10v2M.5.5h4v4h-4zM2.500 5v8" /></svg>
        </TrayItem>
        <TrayItem $width={24} aria-label="Volume">
          <svg width="15" height="12" viewBox="0 0 15 12" fill="none" stroke="#fff"><path d="M.5 4h2L6 .800v10.400L2.500 8h-2zM9 3.500l5 5M14 3.500l-5 5" strokeWidth="1.200" /></svg>
        </TrayItem>
        <TrayText $width={36}>ENG<br />INTL</TrayText>
        <TrayText $width={72}>10:35<br />19-03-2019</TrayText>
        <TrayItem $width={48} aria-label="Notifications">
          <svg width="26" height="26" viewBox="0 0 26 26"><path d="M1 3h16v12H8l-3 3v-3H1z" fill="#fff" /><path d="M4 6h10M4 9h10M4 12h6" stroke="#262626" /><circle cx="17" cy="17" r="8" fill="#2c2c2c" stroke="#8a8a8a" /><text x="17" y="21" textAnchor="middle" fontSize="12" fontWeight="600" fill="#fff">2</text></svg>
        </TrayItem>
        <ShowDesktop aria-label="Show desktop" />
      </Tray>
    </Taskbar>
  );
};

const menus = ['File', 'Edit', 'Object', 'Type', 'Select', 'Effect', 'View', 'Window', 'Help'];

const App = function () {
  return (
    <Window>
      <GlobalStyle />
      <MenuBar>
        <Logo>Ai</Logo>
        {menus.map((name) => <MenuItem key={name}>{name}</MenuItem>)}
        <MenuIcons>
          <Rule />
          <BridgeButton>Br</BridgeButton>
          <IconButton aria-label="Arrange documents">
            <svg width="18" height="15" viewBox="0 0 18 15"><path d="M.5.5h17v14H.5z" fill="#555" stroke="#d0d0d0" strokeWidth="1.500" /><path d="M3 3h7v9H3z" fill="#bbb" /><path d="M11 0v15M11 7.500h7" stroke="#d0d0d0" /></svg>
            <Down />
          </IconButton>
        </MenuIcons>
        <MenuEnd>
          <Rule $height={20} />
          <Workspace>Essentials <Down w={5} c="#aaa" /></Workspace>
          <WindowButtons>
            <WindowButton $width={28} aria-label="Minimize"><svg width="10" height="12"><path d="M0 7h10v3H0z" fill="#e8e8e8" /></svg></WindowButton>
            <WindowButton $width={27} aria-label="Restore"><svg width="12" height="10" viewBox="0 0 12 10" fill="none" stroke="#e8e8e8" strokeWidth="2"><path d="M1 4h6v5H1zM5 4V1h6v5H7" /></svg></WindowButton>
            <WindowButton $width={46} aria-label="Close"><svg width="11" height="9" viewBox="0 0 11 9"><path d="M1 0l9 9M10 0L1 9" stroke="#e8e8e8" strokeWidth="2.600" /></svg></WindowButton>
          </WindowButtons>
        </MenuEnd>
      </MenuBar>
      <Controls />
      <Body>
        <ToolPanel>
          <PanelCap><Chevrons /></PanelCap>
          <GripRow $height={17}><Grip $across /></GripRow>
          {toolGroups.map((group) => (
            <ToolGroup key={group[0].name}>
              {group.map((tool) => (
                <Tool key={tool.name} $active={tool.name === 'Selection'} aria-label={tool.name}>
                  <svg width="28" height="22" viewBox="0 0 28 22">
                    {tool.art}
                    {tool.more && <path d="M27 18v3h-3z" fill="#ddd" />}
                  </svg>
                </Tool>
              ))}
            </ToolGroup>
          ))}
          <Paints>
            <svg width="30" height="112" viewBox="5 778 30 112">
              <path d="M10 786h6v6h-6z" fill="#333" stroke="#d8d8d8" strokeWidth="2" /><path d="M6.500 782.500h6v6h-6z" fill="#fff" stroke="#111" />
              <path d="M28 784h3q2 0 2 3v3M30 782l-3 2 3 2M31 789l2 2 2-2" fill="none" stroke="#777" />
              <path d="M16 812h18v16H16z" fill="#fff" stroke="#222" /><path d="M22 817h6v5h-6z" fill="#484848" stroke="#222" /><path d="M17 827l16-14" stroke="#e0141c" strokeWidth="2" />
              <path d="M5.500 798.500h19v19h-19z" fill="#424242" stroke="#222" />
              <path d="M12 806c0-4 6-4 6 0 0 2-3 2-3 4M15 811.500v2" fill="none" stroke="#c4d4dc" strokeWidth="1.700" />
              <path d="M6.500 834.500h9v9h-9z" fill="#fff" stroke="#222" /><path d="M15.500 834.500h9v9h-9z" fill="url(#tool)" stroke="#222" /><path d="M24.500 834.500h9v9h-9z" fill="#fff" stroke="#222" /><path d="M25 843l8-8" stroke="#e0141c" strokeWidth="2" />
              <circle cx="19" cy="856" r="4" fill="none" stroke="#999" strokeWidth="1.500" /><path d="M19 857h6v6h-6z" fill="#b0b0b0" stroke="#484848" />
              <path d="M11.500 880.500h10v8h-10z" fill="#666" stroke="#bbb" /><path d="M16.500 877.500h11v8h-11z" fill="#777" stroke="#bbb" />
            </svg>
          </Paints>
        </ToolPanel>
        <Main>
          <TabStrip>
            <DocumentTab>Figures.pdf @ 150% (RGB/Preview) <IconButton aria-label="Close document"><Cross /></IconButton></DocumentTab>
          </TabStrip>
          <CanvasRow>
            <Canvas>
              <Artboard>
                <h1>Figures</h1>
                <p>Color should be used in print for the following Figures 1-3</p>
                <p>Figure 1. Kaplan-Meier cumulative incidence curves for time to any mood episode.</p>
                <Figure>
                  <Chart />
                  <RiskTable>
                    <caption>Number At Risk</caption>
                    <colgroup><col width="50" /><col width="45" /></colgroup>
                    <tbody>
                      {risk.map(([name, ...counts]) => (
                        <tr key={name}>
                          <th scope="row">{name}</th>
                          {counts.map((count, i) => <td key={weeks[i]}>{count}</td>)}
                        </tr>
                      ))}
                    </tbody>
                  </RiskTable>
                  <Handle $x="left" $y="top" />
                  <Handle $x="right" $y="top" />
                  <Handle $x="left" $y="bottom" />
                  <Handle $x="right" $y="bottom" />
                </Figure>
              </Artboard>
            </Canvas>
            <VScroll>
              <svg width="10" height="7" viewBox="0 0 10 7"><path d="M5 0l5 7H0z" fill="#e4e4e4" /></svg>
              <VThumb />
            </VScroll>
          </CanvasRow>
          <StatusBar>
            <Pick label="Zoom level" value="150%" width={40} height={16} />
            <StatusNav><Side left bar c="#6c6c6c" /><Side left c="#6c6c6c" /></StatusNav>
            <Pick label="Artboard number" value="1" width={40} height={16} />
            <StatusNav><Side c="#6c6c6c" /><Side bar c="#6c6c6c" /></StatusNav>
            <StatusText>Direct Selection</StatusText>
            <IconButton $width={18} aria-label="Status options"><Side /></IconButton>
            <HScroll><Side left /><HThumb /></HScroll>
          </StatusBar>
        </Main>
        <Dock>
          <PanelCap $end><Chevrons left /></PanelCap>
          {dockGroups.map((group) => (
            <DockGroup key={group[0][0]}>
              <GripRow $height={10}><Grip $across /></GripRow>
              {group.map(([name, art]) => (
                <DockButton key={name} aria-label={name}>
                  <svg width="20" height="20" viewBox="0 0 20 20">{art}</svg>
                </DockButton>
              ))}
            </DockGroup>
          ))}
        </Dock>
      </Body>
      <TaskbarRow />
      <Layers />
    </Window>
  );
};

export default App;
